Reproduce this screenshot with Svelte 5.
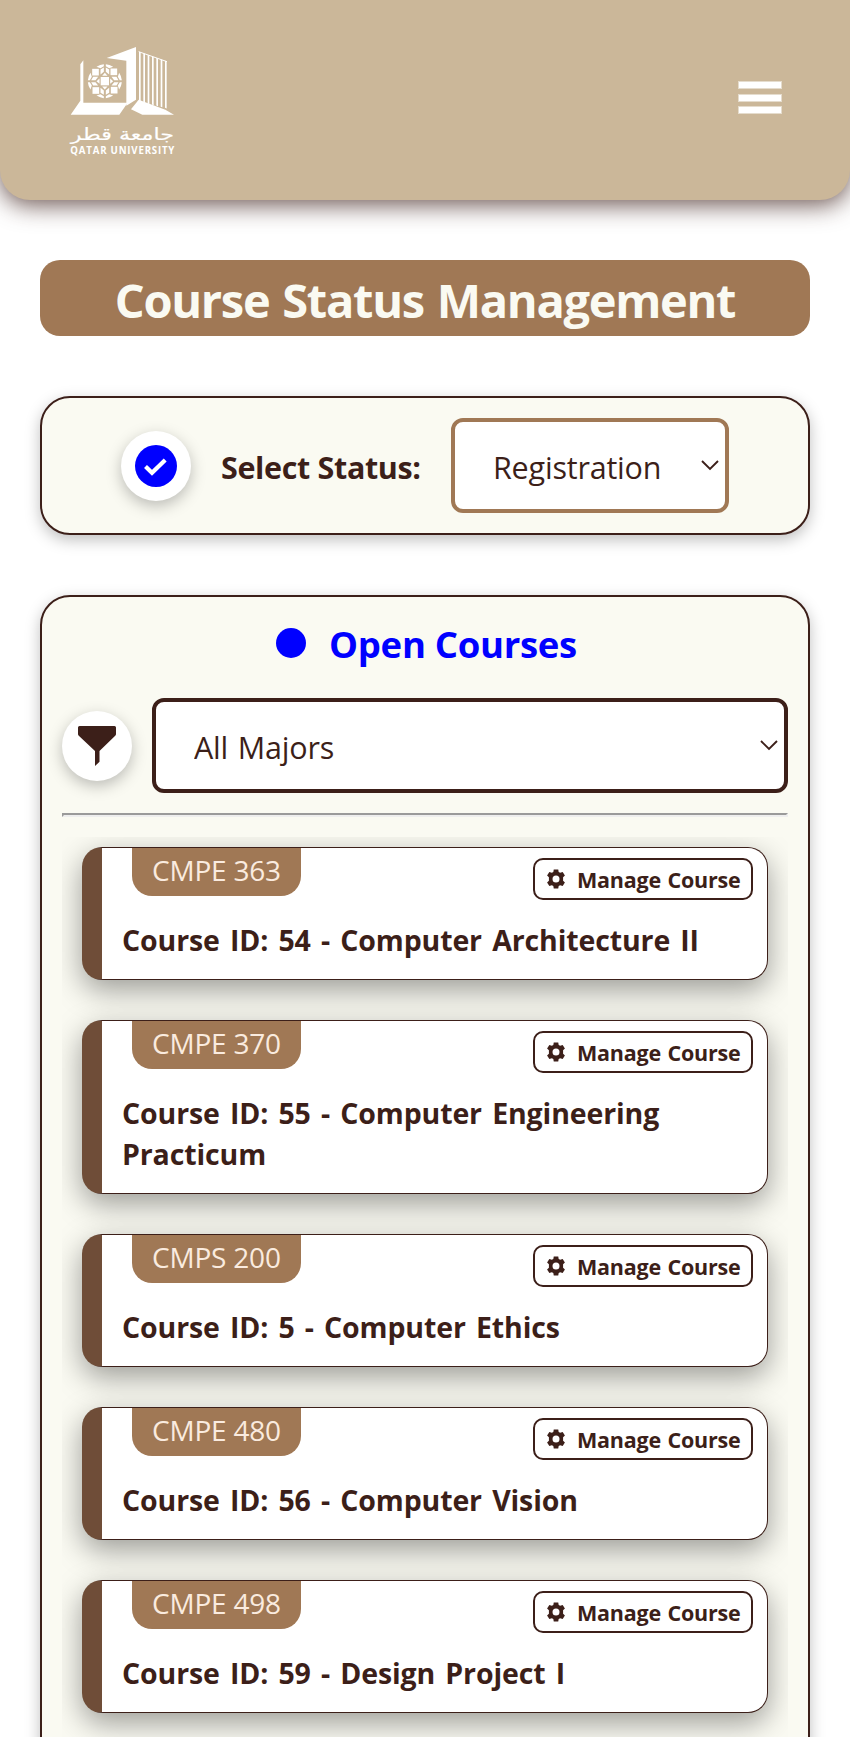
<script>
  const courses = [
    { code: 'CMPE 363', id: 54, name: 'Computer Architecture II' },
    { code: 'CMPE 370', id: 55, name: 'Computer Engineering Practicum' },
    { code: 'CMPS 200', id: 5, name: 'Computer Ethics' },
    { code: 'CMPE 480', id: 56, name: 'Computer Vision' },
    { code: 'CMPE 498', id: 59, name: 'Design Project I' }
  ];
  const quarters = [0, 90, 180, 270];
  const slats = [0, 1, 2, 3, 4, 5, 6];
</script>

{#snippet chevron()}
  <svg class="chevron" width="18" height="11" viewBox="0 0 18 11" fill="none" stroke="#3c1f19" stroke-width="1.9">
    <path d="M1 1l8 8 8-8" />
  </svg>
{/snippet}

<div class="page">
  <header>
    <svg class="logo" width="125" height="120" viewBox="0 0 375 360" fill="#fff">
      <path d="M61 73l9-12v127h133l-25 36H32l29-42z" />
      <path d="M140 54l88-33v158l-29 18V62z" />
      <path d="M213 208l23-29 80 30 26 15h-95z" />
      {#each slats as i}
        <path d="M{237 + i * 13} {35 + i * 4.6}l5 2V{186 + i * 3.2}l-5-2z" />
      {/each}
      <path d="M236 35l85 30" stroke="#fff" stroke-width="3" />
      <path d="M122 111h25v25h-25z" />
      {#each quarters as a}
        <g transform="translate(134.500 123.500) rotate({a})">
          <path d="M-38-37h20v20h-20z" />
          <path d="M-3-51q-11 1-22 8l12 4 10-6zM3-51q11 1 22 8l-12 4-10-6z" />
          <path d="M-3-41v13l-10 8v-15zM3-41v13l10 8v-15z" />
          <path d="M0-25l8 9H-8z" />
        </g>
      {/each}
      <text class="arabic" x="187" y="299" text-anchor="middle" textLength="310" lengthAdjust="spacingAndGlyphs" direction="rtl">جامعة قطر</text>
      <text class="latin" x="31" y="342" textLength="312" lengthAdjust="spacing">QATAR UNIVERSITY</text>
    </svg>
    <button class="menu" aria-label="Menu"><i></i><i></i><i></i></button>
  </header>

  <main>
    <h1><span>Course Status Management</span></h1>

    <section class="status">
      <div class="round">
        <svg width="42" height="42" viewBox="0 0 42 42">
          <circle cx="21" cy="21" r="21" fill="#00f" />
          <path d="M10.500 21.500l6.500 6.300L30.200 15" fill="none" stroke="#fff" stroke-width="4.200" />
        </svg>
      </div>
      <label for="status">Select Status:</label>
      <div class="pick tan">
        <select id="status"><option>Registration</option></select>
        {@render chevron()}
      </div>
    </section>

    <section class="open">
      <h2><i></i><span>Open Courses</span></h2>
      <div class="filter">
        <div class="round">
          <svg width="38" height="40" viewBox="0 0 38 40" fill="#3c1f19">
            <path d="M1.500 0h35q1.500 0 1.500 1.500V8q0 1-.8 1.800L21.500 25v10.800L17 40V25L.8 9.800Q0 9 0 8V1.500Q0 0 1.500 0z" />
          </svg>
        </div>
        <div class="pick dark">
          <select aria-label="Major"><option>All Majors</option></select>
          {@render chevron()}
        </div>
      </div>
      <hr />
      <div class="list">
        {#each courses as c}
          <article>
            <div class="top">
              <div class="code"><span>{c.code}</span></div>
              <button class="manage">
                <svg width="20" height="20" viewBox="0 0 24 24" fill="#3c1f19">
                  <path fill-rule="evenodd" d="M9.300.700h5.400l.5 3 1.800.9 3-1.100 2.700 4.400-2.200 2.100v4l2.200 2.100-2.700 4.400-3-1.100-1.800.9-.5 3H9.300l-.5-3-1.800-.9-3 1.100-2.700-4.400L3.500 14v-4L1.300 7.900 4 3.500l3 1.100 1.800-.9zM12 7.800a4.200 4.200 0 1 0 0 8.400 4.200 4.200 0 1 0 0-8.400z" />
                </svg>
                <span>Manage Course</span>
              </button>
            </div>
            <h3>Course ID: {c.id} - {c.name}</h3>
          </article>
        {/each}
      </div>
    </section>
  </main>
</div>

<style>
  :global(body) { margin: 0; background: #fff; }
  .page { height: 1737px; overflow: hidden; color: #3c1f19; font-family: 'Open Sans', 'Noto Sans', sans-serif; }
  * { box-sizing: border-box; }
  header {
    height: 200px; padding: 0 68px 0 60px; display: flex; align-items: center; justify-content: space-between;
    background: #cbb799; border-radius: 0 0 30px 30px; box-shadow: 0 5px 25px rgba(60, 31, 25, 0.75);
  }
  .arabic { font: 400 50px 'DejaVu Sans', sans-serif; stroke: #fff; stroke-width: 0.5px; }
  .latin { font: 700 29px 'Open Sans', sans-serif; }
  .menu { border: 0; background: none; padding: 0; width: 44px; margin-top: -5px; display: flex; flex-direction: column; gap: 4.500px; }
  .menu i { height: 8px; background: #fff; border: 0.500px solid #e5dccd; }
  main { padding: 60px 40px 0; }
  h1 {
    margin: 0 0 60px; height: 75.700px; border-radius: 20px; background: #a07855; color: #fafaf2;
    font-size: 47px; line-height: 81px; text-align: center; letter-spacing: -1.300px; word-spacing: 2px; font-weight: 700; white-space: nowrap;
  }
  .status, .open {
    border: 2px solid #3c1f19; border-radius: 30px; background: #fafaf2; box-shadow: 0 5px 15px rgba(0, 0, 0, 0.25);
  }
  .status { height: 139px; padding: 0 79px; display: flex; align-items: center; margin-bottom: 60px; }
  .round {
    width: 70px; height: 70px; flex: none; border-radius: 50%; background: #fff; display: flex; align-items: center;
    justify-content: center; margin-top: 1px; box-shadow: 0 5px 15px rgba(0, 0, 0, 0.25);
  }
  label { width: 200px; margin: 3px 30px 0; font-size: 30.500px; font-weight: 700; white-space: nowrap; letter-spacing: -0.350px; }
  .pick { position: relative; height: 95px; }
  .tan { width: 278px; flex: none; }
  .dark { flex: 1; }
  .pick select {
    appearance: none; width: 100%; height: 100%; border: 4px solid #a07855; border-radius: 12px; background: #fff;
    color: #3c1f19; padding: 4px 36px 0 38px; font: 400 30.500px 'Open Sans', sans-serif; letter-spacing: -0.200px; word-spacing: 2px;
  }
  .dark select { border-color: #3c1f19; }
  .chevron { position: absolute; right: 10px; top: 42px; }
  .open { padding: 20px; height: 1300px; }
  h2 { margin: 0; height: 81px; padding: 2px 0 0 3px; display: flex; justify-content: center; gap: 23px; color: #00f; font-size: 36.500px; line-height: 50px; letter-spacing: -0.300px; white-space: nowrap; }
  h2 i { width: 30px; height: 30px; border-radius: 50%; background: #00f; margin-top: 9px; }
  .filter { display: flex; align-items: center; gap: 20px; }
  hr { margin: 20px 0; height: 4px; border: 2px solid; border-color: #9a9a9a #eee #eee #9a9a9a; }
  .list { overflow: hidden; padding: 10px 20px 60px; display: flex; flex-direction: column; gap: 40px; }
  article {
    min-height: 133px; border: 1px solid #3c1f19; border-left: 20px solid #6f4d38; border-radius: 20px; background: #fff;
    padding: 0 14px 18px 20px; box-shadow: 0 10px 30px rgba(0, 0, 0, 0.38);
  }
  .top { display: flex; justify-content: space-between; height: 52px; }
  .code { margin-left: 10px; height: 48px; padding: 0 20px; background: #a07855; color: #faebdf; border-radius: 0 0 20px 20px; font-size: 28px; line-height: 44px; letter-spacing: -0.200px; white-space: nowrap; }
  .manage {
    width: 220px; height: 42px; margin-top: 10px; padding: 0 0 0 11px; border: 2px solid #3c1f19; border-radius: 10px; background: #fff;
    color: #3c1f19; display: flex; align-items: center; gap: 11px; font: 700 21.500px 'Open Sans', sans-serif; letter-spacing: -0.200px; word-spacing: 1px; white-space: nowrap;
  }
  .manage svg { margin-top: 1px; }
  .manage span { margin-top: 2px; }
  h3 { margin: 20px 0 0; font-size: 28.500px; line-height: 41px; letter-spacing: -0.120px; word-spacing: 2.900px; }
</style>
